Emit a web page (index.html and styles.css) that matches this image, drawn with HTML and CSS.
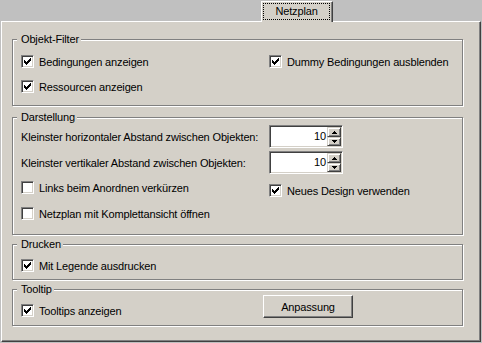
FILE: index.html
```html
<!DOCTYPE html>
<html>
<head>
    <title>Netzplan</title>
    <meta charset="UTF-8">
    <link rel="stylesheet" href="styles.css">
</head>
<body>
    <div class="tabstrip">
        <div class="tab"><span class="tab-label">Netzplan</span></div>
    </div>

    <div class="panel">
        <div class="group group-filter">
            <span class="group-title">Objekt-Filter</span>
            <div class="cols">
                <div class="col col-left">
                    <label class="check"><span class="box"><svg width="11" height="11" viewBox="1 1 11 11"><path d="M3 5h1v3H3z M4 6h1v3H4z M5 7h1v3H5z M6 6h1v3H6z M7 5h1v3H7z M8 4h1v3H8z M9 3h1v3H9z"/></svg></span>Bedingungen anzeigen</label>
                    <label class="check"><span class="box"><svg width="11" height="11" viewBox="1 1 11 11"><path d="M3 5h1v3H3z M4 6h1v3H4z M5 7h1v3H5z M6 6h1v3H6z M7 5h1v3H7z M8 4h1v3H8z M9 3h1v3H9z"/></svg></span>Ressourcen anzeigen</label>
                </div>
                <div class="col">
                    <label class="check"><span class="box"><svg width="11" height="11" viewBox="1 1 11 11"><path d="M3 5h1v3H3z M4 6h1v3H4z M5 7h1v3H5z M6 6h1v3H6z M7 5h1v3H7z M8 4h1v3H8z M9 3h1v3H9z"/></svg></span>Dummy Bedingungen ausblenden</label>
                </div>
            </div>
        </div>

        <div class="group group-display">
            <span class="group-title">Darstellung</span>
            <div class="spin-row">
                <span class="spin-label">Kleinster horizontaler Abstand zwischen Objekten:</span>
                <div class="spin">
                    <span class="spin-value">10</span>
                    <span class="spin-buttons">
                        <span class="spin-btn"><svg width="5" height="3" viewBox="0 0 5 3"><path d="M2 0h1v1h1v1h1v1H0V2h1V1h1z"/></svg></span>
                        <span class="spin-btn"><svg width="5" height="3" viewBox="0 0 5 3"><path d="M0 0h5v1H4v1H3v1H2V2H1V1H0z"/></svg></span>
                    </span>
                </div>
            </div>
            <div class="spin-row">
                <span class="spin-label">Kleinster vertikaler Abstand zwischen Objekten:</span>
                <div class="spin">
                    <span class="spin-value">10</span>
                    <span class="spin-buttons">
                        <span class="spin-btn"><svg width="5" height="3" viewBox="0 0 5 3"><path d="M2 0h1v1h1v1h1v1H0V2h1V1h1z"/></svg></span>
                        <span class="spin-btn"><svg width="5" height="3" viewBox="0 0 5 3"><path d="M0 0h5v1H4v1H3v1H2V2H1V1H0z"/></svg></span>
                    </span>
                </div>
            </div>
            <div class="cols cols-display">
                <div class="col col-left">
                    <label class="check"><span class="box"></span>Links beim Anordnen verkürzen</label>
                    <label class="check"><span class="box"></span>Netzplan mit Komplettansicht öffnen</label>
                </div>
                <div class="col col-shift">
                    <label class="check"><span class="box"><svg width="11" height="11" viewBox="1 1 11 11"><path d="M3 5h1v3H3z M4 6h1v3H4z M5 7h1v3H5z M6 6h1v3H6z M7 5h1v3H7z M8 4h1v3H8z M9 3h1v3H9z"/></svg></span>Neues Design verwenden</label>
                </div>
            </div>
        </div>

        <div class="group group-print">
            <span class="group-title">Drucken</span>
            <label class="check"><span class="box"><svg width="11" height="11" viewBox="1 1 11 11"><path d="M3 5h1v3H3z M4 6h1v3H4z M5 7h1v3H5z M6 6h1v3H6z M7 5h1v3H7z M8 4h1v3H8z M9 3h1v3H9z"/></svg></span>Mit Legende ausdrucken</label>
        </div>

        <div class="group group-tooltip">
            <span class="group-title">Tooltip</span>
            <div class="cols">
                <div class="col col-tip">
                    <label class="check"><span class="box"><svg width="11" height="11" viewBox="1 1 11 11"><path d="M3 5h1v3H3z M4 6h1v3H4z M5 7h1v3H5z M6 6h1v3H6z M7 5h1v3H7z M8 4h1v3H8z M9 3h1v3H9z"/></svg></span>Tooltips anzeigen</label>
                </div>
                <button class="button">Anpassung</button>
            </div>
        </div>
    </div>
</body>
</html>
```

FILE: styles.css
```css
body {
    margin: 0;
    background: #c0c0c0;
    font-family: "Liberation Sans", Arial, sans-serif;
    font-size: 11px;
    letter-spacing: -0.15px;
    color: #000;
}
.tabstrip {
    display: flex;
    height: 21px;
}
.tab {
    position: relative;
    z-index: 1;
    margin: 1px 0 -1px 261px;
    width: 72px;
    height: 21px;
    box-sizing: border-box;
    padding: 1px 2px 0 1px;
    background: #d4d0c8;
    border-top: 1px solid #fff;
    border-left: 1px solid #fff;
    border-right: 1px solid #404040;
    box-shadow: inset -1px 0 #808080;
}
.tab-label {
    display: block;
    height: 17px;
    box-sizing: border-box;
    border: 1px dotted #000;
    line-height: 15px;
    text-align: center;
}
.panel {
    margin-left: 1px;
    width: 480px;
    height: 321px;
    box-sizing: border-box;
    padding: 17px 0 0 10px;
    background: #d4d0c8;
    border-top: 1px solid #fff;
    border-left: 1px solid #fff;
    border-right: 1px solid #404040;
    border-bottom: 1px solid #404040;
    box-shadow: inset -1px -1px #808080;
}
.group {
    position: relative;
    width: 451px;
    box-sizing: border-box;
    padding-left: 8px;
    border: 1px solid #808080;
    box-shadow: 1px 1px #fff, inset 1px 1px #fff;
}
.group-title {
    position: absolute;
    left: 4px;
    top: -7px;
    padding: 0 2px 0 4px;
    line-height: 13px;
    background: #d4d0c8;
}
.group-filter {
    padding-top: 15px;
    padding-bottom: 12px;
}
.group-display {
    margin-top: 11px;
    padding-top: 7px;
    padding-bottom: 14px;
}
.group-print {
    margin-top: 9px;
    padding-top: 14px;
    padding-bottom: 7px;
}
.group-tooltip {
    margin-top: 9px;
    padding-top: 5px;
    padding-bottom: 7px;
}
.cols {
    display: flex;
    align-items: flex-start;
}
.col {
    display: flex;
    flex-direction: column;
}
.col-left {
    width: 248px;
    gap: 12px;
}
.cols-display {
    margin-top: 7px;
}
.cols-display .col-left {
    gap: 13px;
}
.col-shift {
    margin-top: 3px;
}
.col-tip {
    width: 242px;
    margin-top: 9px;
}
.check {
    display: flex;
    align-items: center;
    height: 13px;
    white-space: nowrap;
}
.box {
    flex: none;
    width: 13px;
    height: 13px;
    box-sizing: border-box;
    margin-right: 5px;
    background: #fff;
    border: 1px solid;
    border-color: #808080 #fff #fff #808080;
    box-shadow: inset 1px 1px #404040, inset -1px -1px #d4d0c8;
}
.box svg {
    display: block;
    shape-rendering: crispEdges;
}
.spin-row {
    display: flex;
    align-items: center;
    height: 23px;
}
.spin-row + .spin-row {
    margin-top: 3px;
}
.spin-label {
    width: 248px;
    white-space: nowrap;
}
.spin {
    display: flex;
    width: 74px;
    height: 23px;
    box-sizing: border-box;
    padding: 1px;
    background: #fff;
    border: 1px solid;
    border-color: #808080 #fff #fff #808080;
    box-shadow: inset 1px 1px #404040, inset -1px -1px #d4d0c8;
}
.spin-value {
    flex: 1;
    padding-right: 1px;
    line-height: 19px;
    text-align: right;
}
.spin-buttons {
    display: flex;
    flex-direction: column;
    width: 14px;
}
.spin-btn {
    display: flex;
    align-items: center;
    justify-content: center;
    height: 10px;
    box-sizing: border-box;
    background: #d4d0c8;
    border: 1px solid;
    border-color: #d4d0c8 #404040 #404040 #d4d0c8;
    box-shadow: inset 1px 1px #fff, inset -1px -1px #808080;
}
.spin-btn + .spin-btn {
    height: 9px;
}
.spin-btn svg {
    display: block;
    shape-rendering: crispEdges;
}
.button {
    width: 90px;
    height: 23px;
    padding: 0;
    font-family: inherit;
    font-size: 11px;
    letter-spacing: inherit;
    color: #000;
    background: #d4d0c8;
    border: 1px solid;
    border-color: #fff #404040 #404040 #fff;
    border-radius: 0;
    box-shadow: inset -1px -1px #808080;
}
```
